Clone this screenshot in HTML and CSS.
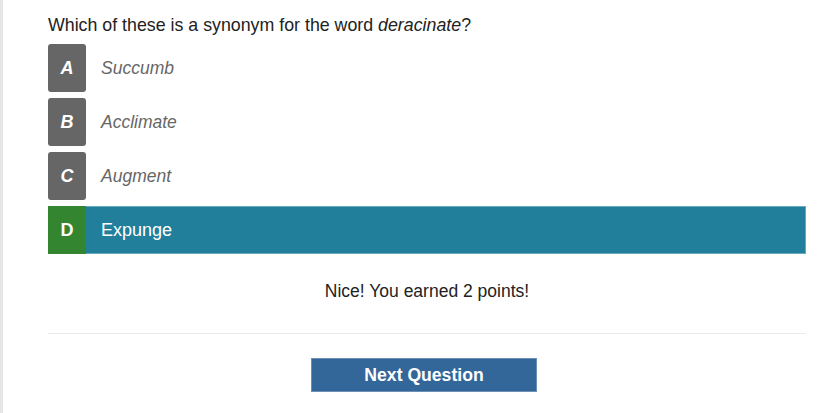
FILE: index.html
```html
<!DOCTYPE html>
<html>
<head>
<meta charset="utf-8">
<link rel="stylesheet" href="styles.css">
</head>
<body>
<div class="page">
  <div class="quiz">
    <p class="question">Which of these is a synonym for the word <em>deracinate</em>?</p>
    <div class="options">
      <div class="option"><span class="letter">A</span><span class="label">Succumb</span></div>
      <div class="option"><span class="letter">B</span><span class="label">Acclimate</span></div>
      <div class="option"><span class="letter">C</span><span class="label">Augment</span></div>
      <div class="option correct"><span class="letter">D</span><span class="label">Expunge</span></div>
    </div>
    <p class="feedback">Nice! You earned 2 points!</p>
    <hr class="divider">
    <div class="actions"><button class="next">Next Question</button></div>
  </div>
</div>
</body>
</html>
```
FILE: styles.css
```css
html, body {
  margin: 0;
  padding: 0;
  background: #fff;
}
.page {
  min-height: 413px;
  border-left: 3px solid #e6e6e6;
  box-sizing: border-box;
  font-family: "Liberation Sans", Arial, sans-serif;
  color: #222;
}
.quiz {
  width: 758px;
  margin-left: 45px;
  padding-top: 16px;
}
.question {
  margin: 0 0 10px 0;
  font-size: 17.8px;
  line-height: 18px;
}
.options {
  display: flex;
  flex-direction: column;
  gap: 6px;
}
.option {
  display: flex;
  align-items: center;
  height: 48px;
}
.letter {
  width: 38px;
  height: 48px;
  background: #666;
  color: #fff;
  border-radius: 3px;
  display: flex;
  align-items: center;
  justify-content: center;
  font-weight: bold;
  font-size: 18px;
  font-style: italic;
}
.label {
  padding-left: 15px;
  font-size: 17.5px;
  font-style: italic;
  color: #666;
}
.option.correct {
  background: #217f9b;
  box-shadow: inset 0 0 0 1px #6aaabd;
}
.option.correct .letter {
  background: #34852f;
  border-radius: 0;
  font-style: normal;
}
.option.correct .label {
  color: #fff;
  font-style: normal;
  font-size: 18px;
}
.feedback {
  margin: 28px 0 0 0;
  text-align: center;
  font-size: 17.5px;
  line-height: 18px;
}
.divider {
  border: 0;
  border-top: 1px solid #ebebeb;
  margin: 33px 0 0 0;
}
.actions {
  display: flex;
  justify-content: center;
  padding-top: 24px;
  padding-right: 6px;
}
.next {
  width: 226px;
  height: 34px;
  background: #336699;
  color: #fff;
  border: 1px solid #6c8fb5;
  font-family: "Liberation Sans", Arial, sans-serif;
  font-weight: bold;
  font-size: 17.6px;
  padding: 0;
}
```
